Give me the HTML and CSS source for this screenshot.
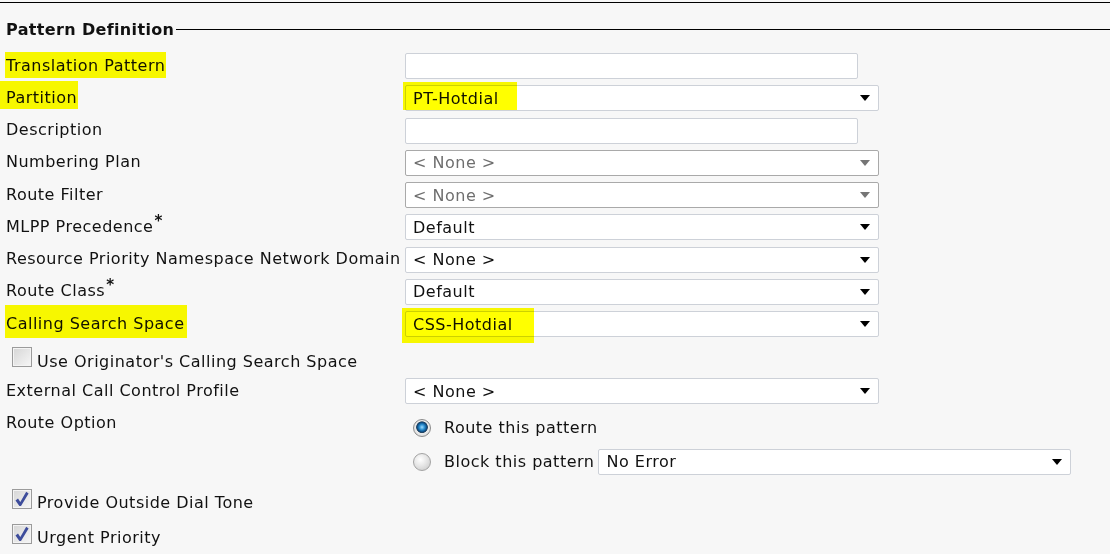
FILE: index.html
```html
<!DOCTYPE html>
<html lang="en">
<head>
  <meta charset="UTF-8" />
  <title>Pattern Definition</title>
  <link rel="stylesheet" href="styles.css">
</head>
<body>
  <div class="page">
    <div class="top-rule"></div>

    <div class="legend">
      <span class="legend-title">Pattern Definition</span>
      <span class="legend-line"></span>
    </div>

    <div class="form">
      <div class="row">
        <div class="label"><span class="hl hl-tp">Translation Pattern</span></div>
        <div class="field text"></div>
      </div>
      <div class="row">
        <div class="label"><span class="hl hl-part">Partition</span></div>
        <div class="field select"><span class="hl hl-pt">PT-Hotdial</span><span class="caret"></span></div>
      </div>
      <div class="row">
        <div class="label">Description</div>
        <div class="field text"></div>
      </div>
      <div class="row">
        <div class="label">Numbering Plan</div>
        <div class="field select disabled">&lt; None &gt;<span class="caret"></span></div>
      </div>
      <div class="row">
        <div class="label">Route Filter</div>
        <div class="field select disabled">&lt; None &gt;<span class="caret"></span></div>
      </div>
      <div class="row">
        <div class="label">MLPP Precedence<span class="req">*</span></div>
        <div class="field select">Default<span class="caret"></span></div>
      </div>
      <div class="row">
        <div class="label">Resource Priority Namespace Network Domain</div>
        <div class="field select">&lt; None &gt;<span class="caret"></span></div>
      </div>
      <div class="row">
        <div class="label">Route Class<span class="req">*</span></div>
        <div class="field select">Default<span class="caret"></span></div>
      </div>
      <div class="row">
        <div class="label"><span class="hl hl-css">Calling Search Space</span></div>
        <div class="field select"><span class="hl hl-csshd">CSS-Hotdial</span><span class="caret"></span></div>
      </div>

      <div class="check first">
        <span class="box"></span>
        <span>Use Originator's Calling Search Space</span>
      </div>

      <div class="row">
        <div class="label">External Call Control Profile</div>
        <div class="field select">&lt; None &gt;<span class="caret"></span></div>
      </div>

      <div class="route">
        <div class="label route-label">Route Option</div>
        <div class="radios">
          <div class="radio-line">
            <span class="radio on"></span>
            <span class="radio-text">Route this pattern</span>
          </div>
          <div class="radio-line">
            <span class="radio"></span>
            <span class="radio-text">Block this pattern</span>
            <div class="field select block">No Error<span class="caret"></span></div>
          </div>
        </div>
      </div>

      <div class="check">
        <span class="box">
          <svg width="18" height="18" viewBox="0 0 18 18"><path d="M2.5 10.5 L5 8.5 L7.3 12 L13.2 1.8 L15.6 3.4 L8 16 L6.4 16 Z" fill="#3d4c9b"/></svg>
        </span>
        <span>Provide Outside Dial Tone</span>
      </div>
      <div class="check">
        <span class="box">
          <svg width="18" height="18" viewBox="0 0 18 18"><path d="M2.5 10.5 L5 8.5 L7.3 12 L13.2 1.8 L15.6 3.4 L8 16 L6.4 16 Z" fill="#3d4c9b"/></svg>
        </span>
        <span>Urgent Priority</span>
      </div>
    </div>
  </div>
</body>
</html>
```

FILE: styles.css
```css
body {
  margin: 0;
  background: #f7f7f7;
  font-family: "DejaVu Sans", Tahoma, sans-serif;
  font-size: 16px;
  line-height: 19px;
  letter-spacing: 0.5px;
  color: #111;
}
.page {
  padding-top: 2px;
}
.top-rule {
  border-top: 1px solid #000;
}
.legend {
  display: flex;
  align-items: center;
  margin-top: 16.5px;
  padding-left: 6px;
}
.legend-title {
  font-weight: bold;
  letter-spacing: 0.35px;
}
.legend-line {
  flex: 1;
  border-top: 1px solid #000;
  margin-left: 2px;
}
.form {
  margin-top: 11.5px;
  padding-left: 6px;
}
.row {
  display: grid;
  grid-template-columns: 399px auto;
  height: 32.25px;
}
.label {
  padding-top: 5.5px;
  white-space: nowrap;
}
.req {
  font-weight: bold;
  font-size: 15px;
  position: relative;
  top: -6px;
  margin-left: 1px;
}
.field {
  box-sizing: border-box;
  height: 26px;
  margin-top: 3px;
  background: #fff;
  border: 1px solid #cdd1d8;
  border-radius: 2px;
}
.text {
  width: 453px;
}
.select {
  width: 474px;
  display: flex;
  align-items: center;
  padding-left: 7px;
  white-space: nowrap;
}
.caret {
  margin-left: auto;
  margin-right: 8px;
  width: 0;
  height: 0;
  border-left: 5.5px solid transparent;
  border-right: 5.5px solid transparent;
  border-top: 6px solid #000;
}
.select.disabled {
  color: #6f6f6f;
  border-color: #a9a9a9;
}
.select.disabled .caret {
  border-top-color: #757575;
}

/* highlighter marks */
.hl {
  position: relative;
}
.hl::before {
  content: "";
  position: absolute;
  background: #ffff00;
  mix-blend-mode: multiply;
}
.hl-tp::before { top: -3.5px; bottom: -3.5px; left: -1px; right: -1px; }
.hl-part::before { top: -7px; bottom: -2px; left: -6px; right: -1px; }
.hl-pt::before { top: -7px; bottom: -2px; left: -10px; right: -18px; }
.hl-css::before { top: -8.5px; bottom: -5px; left: -1px; right: -2px; }
.hl-csshd::before { top: -7px; bottom: -9px; left: -11px; right: -21px; }

/* checkboxes */
.check {
  display: flex;
  align-items: baseline;
  box-sizing: border-box;
  height: 35px;
  padding-top: 10.5px;
  padding-left: 6px;
}
.check.first {
  padding-top: 7px;
}
.box {
  box-sizing: border-box;
  width: 20px;
  height: 20px;
  margin-right: 5px;
  border: 1px solid #9b9b9b;
  box-shadow: inset 0 0 0 1px #f4f4f4;
  background: linear-gradient(135deg, #d6d6d6, #f6f6f6);
  display: inline-flex;
  align-items: center;
  justify-content: center;
}

/* route option */
.route {
  display: grid;
  grid-template-columns: 399px auto;
  padding-top: 3px;
}
.route-label {
  padding-top: 2px;
}
.radio-line {
  display: flex;
  align-items: center;
  height: 34px;
  padding-left: 8px;
}
.radio {
  box-sizing: border-box;
  width: 18px;
  height: 18px;
  border-radius: 50%;
  border: 1px solid #a3a3a3;
  background: radial-gradient(circle at 40% 35%, #ffffff 0, #e6e6e6 45%, #c4c4c4 100%);
}
.radio.on {
  border-color: #8b8b8b;
  background: radial-gradient(circle at 50% 45%, #9fdcff 0, #2b8fd0 22%, #0d4a80 40%, #27445e 46%, #ececec 52%, #dcdcdc 80%, #bdbdbd 100%);
}
.radio-text {
  margin-left: 13px;
}
.select.block {
  margin-top: 0;
  margin-left: 4px;
  width: 473px;
}
```
